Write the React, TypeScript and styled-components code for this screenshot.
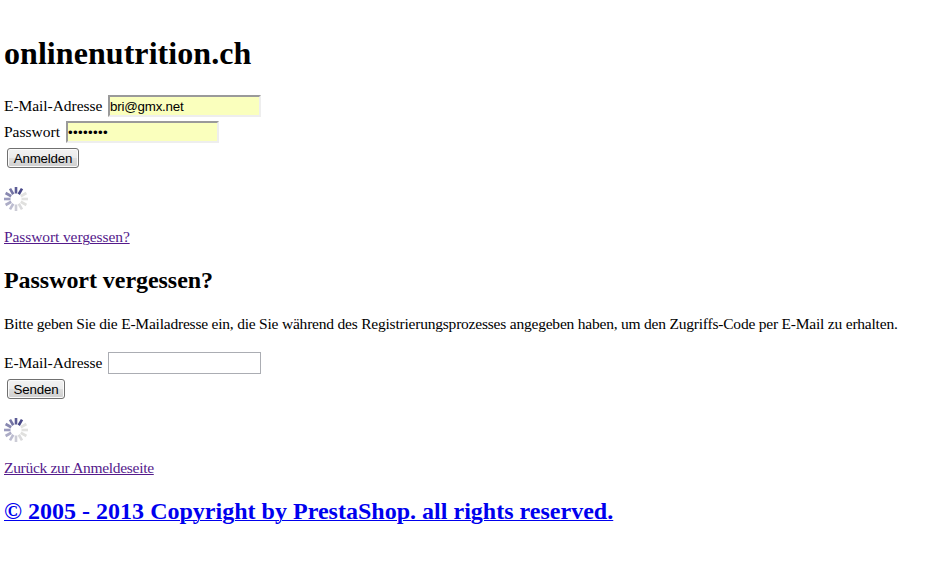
import React from 'react';
import styled, { createGlobalStyle } from 'styled-components';

const GlobalStyle = createGlobalStyle`
  body {
    margin: 0;
    background: #fff;
    color: #000;
    font-family: "Liberation Serif", "Times New Roman", serif;
    font-size: 15.5px;
  }
`;

const Page = styled.main`
  padding: 35px 4px 0;
  white-space: nowrap;
`;

const Title = styled.h1`
  margin: 0 0 23px;
  font-size: 32px;
  line-height: 37px;
  letter-spacing: 0.06px;
`;

const Subtitle = styled.h2<{ $spacing?: number }>`
  margin: 0 0 20px;
  font-size: 24px;
  line-height: 28px;
  letter-spacing: ${({ $spacing }) => $spacing ?? 0}px;
`;

const Text = styled.p<{ $spacing?: number }>`
  margin: 0;
  padding-bottom: 1px;
  line-height: 17px;
  letter-spacing: ${({ $spacing }) => $spacing ?? 0}px;
`;

const Hint = styled(Text)`
  padding: 1px 0 0;
`;

const Row = styled.div`
  display: flex;
  align-items: center;
  height: 22px;
  margin-bottom: 4px;
`;

const Label = styled.label<{ $width: number; $spacing?: number }>`
  width: ${({ $width }) => $width}px;
  padding-bottom: 1px;
  line-height: 17px;
  letter-spacing: ${({ $spacing }) => $spacing ?? 0}px;
`;

const Input = styled.input<{ $filled?: boolean }>`
  box-sizing: border-box;
  width: 153px;
  height: 22px;
  margin: 0;
  padding: 1px 0;
  border: ${({ $filled }) => ($filled ? '2px solid' : '1px solid #abadb3')};
  ${({ $filled }) => $filled && 'border-color: #9a9a9a #eee #eee #9a9a9a;'}
  border-radius: 0;
  outline: none;
  background: ${({ $filled }) => ($filled ? '#faffbd' : '#fff')};
  color: #000;
  font: 13.333px "Liberation Sans", Arial, sans-serif;
  letter-spacing: ${({ type }) => (type === 'password' ? 0.33 : -0.2)}px;
`;

const Button = styled.button<{ $width: number }>`
  display: block;
  box-sizing: border-box;
  width: ${({ $width }) => $width}px;
  height: 20px;
  margin: 5px 0 0 3px;
  padding: 1px 0 0;
  border: 1px solid #707070;
  border-radius: 3px;
  background: linear-gradient(#f2f2f2 0%, #ebebeb 50%, #ddd 50%, #cfcfcf 100%);
  box-shadow: inset 0 0 0 1px #fbfbfb;
  color: #000;
  font: 13.333px/17px "Liberation Sans", Arial, sans-serif;
  letter-spacing: -0.2px;
`;

const Loader = styled.svg`
  display: block;
  width: 24px;
  height: 24px;
  margin: 19px 0 17px;
`;

const Link = styled.a<{ $visited?: boolean }>`
  color: ${({ $visited }) => ($visited ? '#551a8b' : '#0000ee')};
  text-decoration: underline;
  text-decoration-thickness: 1px;
`;

const Section = styled.section`
  margin-top: 20px;
`;

// clockwise, starting at two o'clock
const SPOKES = [
  '#e2e2e0', '#e2e2e0', '#e0e0de', '#dadadc', '#ccccd6', '#bcbcd0',
  '#acacc6', '#9c9cbe', '#8888b0', '#7474a4', '#5c5c96', '#484888',
];

const Spinner: React.FC = () => (
  <Loader viewBox="-12 -12 24 24">
    {SPOKES.map((color, i) => (
      <line
        key={i}
        y1={-5.5}
        y2={-12}
        stroke={color}
        strokeWidth={2.6}
        transform={`rotate(${60 + i * 30})`}
      />
    ))}
  </Loader>
);

const App: React.FC = () => {
  return (
    <>
      <GlobalStyle />
      <Page>
        <Title>onlinenutrition.ch</Title>
        <Row>
          <Label htmlFor="email" $width={104} $spacing={-0.05}>E-Mail-Adresse</Label>
          <Input id="email" type="text" defaultValue="bri@gmx.net" $filled />
        </Row>
        <Row>
          <Label htmlFor="passwd" $width={62}>Passwort</Label>
          <Input id="passwd" type="password" defaultValue="password" $filled />
        </Row>
        <Button $width={72}>Anmelden</Button>
        <Spinner />
        <Text $spacing={-0.1}><Link href="#forgot" $visited>Passwort vergessen?</Link></Text>

        <Section id="forgot">
          <Subtitle $spacing={-0.05}>Passwort vergessen?</Subtitle>
          <Hint $spacing={-0.213}>
            Bitte geben Sie die E-Mailadresse ein, die Sie während des Registrierungsprozesses angegeben haben, um den Zugriffs-Code per E-Mail zu erhalten.
          </Hint>
          <Section>
            <Row>
              <Label htmlFor="email-forgot" $width={104} $spacing={-0.05}>E-Mail-Adresse</Label>
              <Input id="email-forgot" type="text" />
            </Row>
            <Button $width={58}>Senden</Button>
            <Spinner />
            <Text $spacing={-0.3}><Link href="#login" $visited>Zurück zur Anmeldeseite</Link></Text>
          </Section>
        </Section>

        <Section>
          <Subtitle $spacing={0.015}>
            <Link href="#prestashop">© 2005 - 2013 Copyright by PrestaShop. all rights reserved.</Link>
          </Subtitle>
        </Section>
      </Page>
    </>
  );
};

export default App;
